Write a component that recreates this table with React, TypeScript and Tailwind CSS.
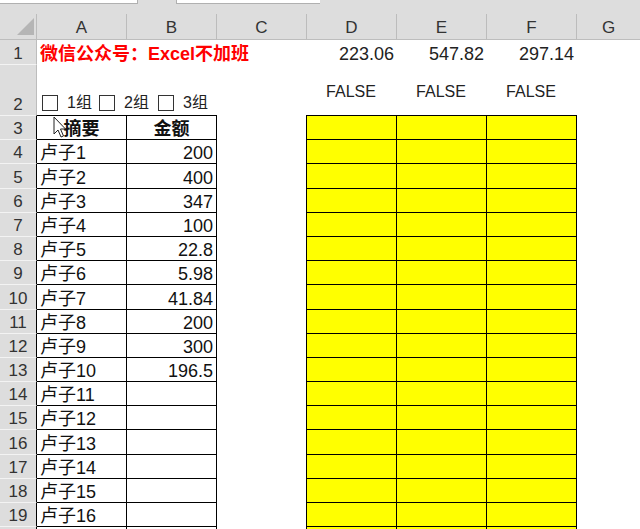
import React from "react";

const names = Array.from({ length: 16 }, (_, i) => `卢子${i + 1}`);
const amounts = ["200", "400", "347", "100", "22.8", "5.98", "41.84", "200", "300", "196.5"];
const totals = ["223.06", "547.82", "297.14"];
const letters = ["A", "B", "C", "D", "E", "F", "G"];

const font = "font-['Liberation_Sans','Noto_Sans_CJK_SC',sans-serif]";

const RowHead = ({ n, dark, top = true }: { n?: number; dark?: boolean; top?: boolean }) => (
  <div className={`w-[37px] shrink-0 flex items-end justify-center bg-[#dddddd] border-r text-[17px] leading-[20px] text-[#333] ${dark ? "border-r-black" : "border-r-[#bcbcbc]"} ${top ? "border-t border-t-[#f3f3f3]" : ""}`}>
    {n}
  </div>
);

const Cursor = () => (
  <svg className="absolute left-[53px] top-[116px]" width="13" height="22" viewBox="0 0 13 22">
    <path d="M1 1 V18 L5 14 L8 21 L10.5 20 L7.5 13 H12.5 Z" fill="#fff" stroke="#222" strokeWidth="1" strokeLinejoin="round" />
  </svg>
);

const Check = ({ label, w }: { label: string; w: string }) => (
  <div className={`flex items-center shrink-0 ${w}`}>
    <span className="w-[16px] h-[16px] border border-[#333] bg-white" />
    <span className="ml-[9px] text-[16px] leading-[16px] text-[#222]">{label}</span>
  </div>
);

export default function App() {
  const tableRows = Array.from({ length: 18 }, (_, i) => i + 3);
  return (
    <div className={`relative w-[640px] h-[529px] overflow-hidden bg-white ${font}`}>
      {/* top strip */}
      <div className="flex h-[4px] bg-[#dddddd]">
        <div className="w-[138px] bg-white border-r border-b border-[#b0b0b0]" />
        <div className="w-[38px]" />
        <div className="w-[144px] bg-white border-l border-b border-[#b0b0b0]" />
      </div>
      <div className="h-[10px] bg-[#dddddd]" />

      {/* column header */}
      <div className="flex h-[26px] bg-[#dddddd] border-b border-[#bdbdbd] text-[17px] leading-[20px] text-[#333]">
        <div className="w-[37px] shrink-0 border-r border-[#bcbcbc] flex items-end justify-end pr-[1px] pb-[3px]">
          <svg width="19" height="19" viewBox="0 0 19 19">
            <path d="M18 1 V18 H1 Z" fill="#b5b5b5" />
          </svg>
        </div>
        {letters.map((l, i) => (
          <div key={l} className={`flex items-end justify-center pb-[1px] ${i === 0 ? "w-[89px]" : i === 6 ? "flex-1 border-l border-[#bcbcbc]" : "w-[90px] border-l border-[#bcbcbc]"}`}>
            {l}
          </div>
        ))}
      </div>

      {/* row 1 */}
      <div className="flex h-[24px] text-[18px] leading-[20px]">
        <RowHead n={1} top={false} />
        <div className="w-[89px] shrink-0 flex items-end pl-[3px] whitespace-nowrap font-bold text-[#ff0000] overflow-visible z-10">
          微信公众号：Excel不加班
        </div>
        <div className="w-[181px] shrink-0" />
        {totals.map((t) => (
          <div key={t} className="w-[90px] shrink-0 flex items-end justify-end pr-[3px] text-[#222]">
            {t}
          </div>
        ))}
      </div>

      {/* row 2 */}
      <div className="flex h-[51px]">
        <RowHead n={2} />
        <div className="w-[89px] shrink-0 flex items-end pl-[5px] pb-[4px] whitespace-nowrap overflow-visible z-10 border-t border-transparent">
          <Check label="1组" w="w-[57px]" />
          <Check label="2组" w="w-[59px]" />
          <Check label="3组" w="w-[60px]" />
        </div>
        <div className="w-[180px] shrink-0" />
        {[0, 1, 2].map((i) => (
          <div key={i} className="w-[90px] shrink-0 flex items-start justify-center pt-[18px] text-[16px] leading-[20px] text-[#222]">
            FALSE
          </div>
        ))}
      </div>

      {/* table rows */}
      {tableRows.map((r) => {
        const idx = r - 4;
        const header = r === 3;
        const last = r === 20;
        return (
          <div key={r} className="flex h-[24.2px] text-[18px] leading-[20px] text-[#111]">
            <RowHead n={last ? undefined : r} dark />
            <div className={`w-[89px] shrink-0 flex items-end border-t border-black ${header ? "justify-center font-bold" : "pl-[3px]"}`}>
              {header ? "摘要" : last ? "" : names[idx]}
            </div>
            <div className={`w-[90px] shrink-0 flex items-end border-t border-l border-black ${header ? "justify-center font-bold" : "justify-end pr-[3px]"}`}>
              {header ? "金额" : amounts[idx]}
            </div>
            <div className="w-[90px] shrink-0 border-l border-black" />
            <div className="w-[90px] shrink-0 border-l border-t border-black bg-[#ffff00]" />
            <div className="w-[90px] shrink-0 border-l border-t border-black bg-[#ffff00]" />
            <div className="w-[90px] shrink-0 border-l border-t border-black bg-[#ffff00]" />
            <div className="flex-1 border-l border-black" />
          </div>
        );
      })}

      <Cursor />
    </div>
  );
}
